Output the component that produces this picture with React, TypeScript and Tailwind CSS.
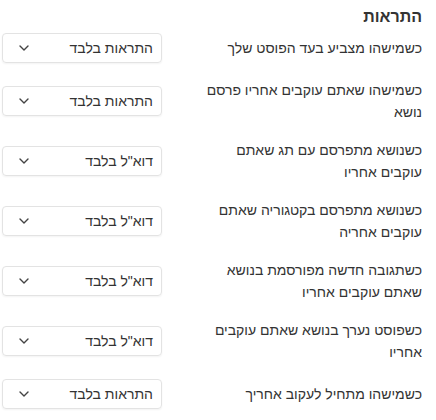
import React from "react";

const rows: { label: string; value: string }[] = [
  { label: "כשמישהו מצביע בעד הפוסט שלך", value: "התראות בלבד" },
  { label: "כשמישהו שאתם עוקבים אחריו פרסם נושא", value: "התראות בלבד" },
  { label: "כשנושא מתפרסם עם תג שאתם עוקבים אחריו", value: 'דוא"ל בלבד' },
  { label: "כשנושא מתפרסם בקטגוריה שאתם עוקבים אחריה", value: 'דוא"ל בלבד' },
  { label: "כשתגובה חדשה מפורסמת בנושא שאתם עוקבים אחריו", value: 'דוא"ל בלבד' },
  { label: "כשפוסט נערך בנושא שאתם עוקבים אחריו", value: 'דוא"ל בלבד' },
  { label: "כשמישהו מתחיל לעקוב אחריך", value: "התראות בלבד" },
];

function Chevron() {
  return (
    <svg width="10" height="6" viewBox="0 0 10 6" fill="none">
      <path d="M1 1l4 4 4-4" stroke="#444" strokeWidth="1.4" strokeLinecap="round" strokeLinejoin="round" />
    </svg>
  );
}

export default function App() {
  return (
    <div
      dir="rtl"
      className="w-[436px] h-[420px] bg-white pr-[14px] pl-[2px] pt-[6px] text-[#333] font-['Liberation_Sans',Arial,sans-serif] overflow-hidden"
    >
      <h2 className="text-[16px] font-bold leading-[22px] mb-[5px]">התראות</h2>
      <div className="flex flex-col gap-[16px]">
        {rows.map((r) => (
          <div key={r.label} className="flex items-center justify-between">
            <div className="w-[225px] text-[14px] leading-[22px]">{r.label}</div>
            <div className="w-[160px] h-[30px] flex items-center justify-between border border-[#e3e3e3] rounded-[4px] shadow-[0_1px_2px_rgba(0,0,0,0.05)] pr-[8px] pl-[16px] text-[14px]">
              <span>{r.value}</span>
              <Chevron />
            </div>
          </div>
        ))}
      </div>
    </div>
  );
}
